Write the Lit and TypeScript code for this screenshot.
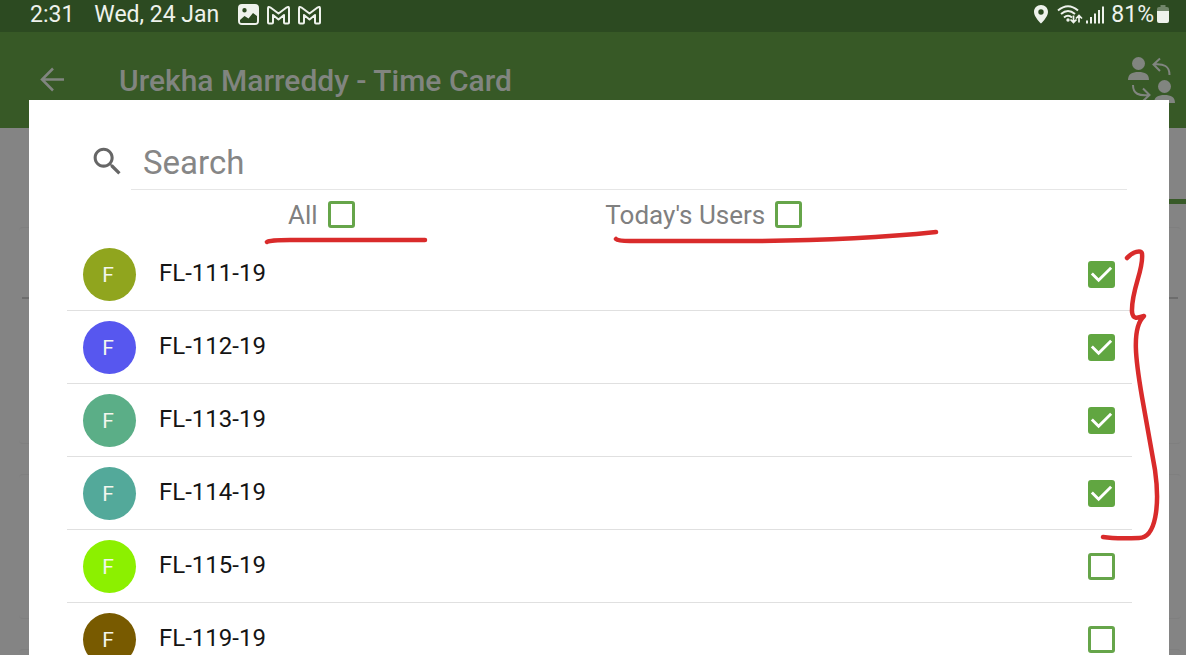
import { LitElement, html, css, svg } from "lit";
import { customElement, property, state } from "lit/decorators.js";

interface User {
  name: string;
  color: string;
  selected: boolean;
}

@customElement("check-box")
class CheckBox extends LitElement {
  static styles = css`
    :host {
      display: block;
    }
    .field {
      display: flex;
      align-items: center;
      gap: 10px;
      color: #808080;
      font-size: 26px;
      line-height: 32px;
    }
    .box {
      display: grid;
    }
    .input {
      grid-area: 1 / 1;
      appearance: none;
      box-sizing: border-box;
      width: 27px;
      height: 27px;
      margin: 0;
      border: 3px solid #66a54a;
      border-radius: 3px;
      background: #fff;
    }
    .input:checked {
      border-color: #61a641;
      background: #61a641;
    }
    .tick {
      grid-area: 1 / 1;
      width: 27px;
      height: 27px;
      fill: none;
      stroke: #fff;
      stroke-width: 3;
      pointer-events: none;
    }
    .input:not(:checked) + .tick {
      display: none;
    }
  `;

  @property() text = "";
  @property() name = "";
  @property({ type: Boolean }) checked = false;

  render() {
    return html`<label class="field">
      ${this.text ? html`<span>${this.text}</span>` : null}
      <span class="box">
        <input class="input" type="checkbox" aria-label=${this.text || this.name} .checked=${this.checked} />
        <svg class="tick" viewBox="0 0 28 28" aria-hidden="true"><path d="M4 13l7 7L24 7" /></svg>
      </span>
    </label>`;
  }
}

@customElement("user-row")
class UserRow extends LitElement {
  static styles = css`
    :host {
      display: block;
    }
    .row {
      display: flex;
      align-items: center;
      height: 72px;
      padding: 0 17px 0 16px;
      border-bottom: 1px solid #e0e0e0;
    }
    .avatar {
      display: grid;
      place-items: center;
      width: 53px;
      height: 53px;
      padding: 2px 3px 0 0;
      box-sizing: border-box;
      border-radius: 50%;
      color: #f4f6ee;
      font-size: 21px;
      line-height: 24px;
    }
    .name {
      flex: 1;
      padding: 0 0 2px 23px;
      color: #141414;
      font-size: 24px;
      line-height: 28px;
    }
  `;

  @property({ attribute: false }) user!: User;

  render() {
    const u = this.user;
    return html`<div class="row">
      <span class="avatar" style="background:${u.color}">F</span>
      <span class="name">${u.name}</span>
      <check-box name=${u.name} ?checked=${u.selected}></check-box>
    </div>`;
  }
}

const mail = svg`<path d="M5 20.500V6.500Q5 4 7.500 5.500L15.500 11.500 23.500 5.500Q26 4 26 6.500V20.500Q26 21.500 25 21.500H22Q21 21.500 21 20.500V13L15.500 17.500 10 13V20.500Q10 21.500 9 21.500H6Q5 21.500 5 20.500Z" />`;

@customElement("app-root")
class AppRoot extends LitElement {
  static styles = css`
    :host {
      display: block;
      position: relative;
      height: 100vh;
      overflow: hidden;
      background: #848484;
      font-family: Roboto, "Liberation Sans", sans-serif;
    }
    .status {
      display: flex;
      align-items: center;
      height: 32px;
      box-sizing: border-box;
      padding: 0 17px 2px 30px;
      background: #2c4a21;
      color: #eef2ec;
      font-size: 23px;
      line-height: 28px;
    }
    .date {
      margin: 0 18px 0 20px;
    }
    .spacer {
      flex: 1;
    }
    .notices,
    .signals {
      display: flex;
      align-items: center;
      gap: 3px;
    }
    .glyph {
      display: block;
      height: 26px;
      fill: #eef2ec;
    }
    .outline {
      fill: none;
      stroke: #eef2ec;
      stroke-width: 2;
      stroke-linejoin: round;
    }
    .bar {
      display: flex;
      align-items: center;
      height: 96px;
      box-sizing: border-box;
      padding: 0 10px 0 36px;
      background: #375926;
      color: #818580;
    }
    .back {
      display: block;
      padding: 0;
      border: 0;
      background: none;
      color: inherit;
    }
    .icon {
      display: block;
      fill: currentColor;
    }
    .line {
      fill: none;
      stroke: currentColor;
      stroke-width: 2.500;
    }
    .thin {
      fill: none;
      stroke: currentColor;
      stroke-width: 2;
    }
    .title {
      flex: 1;
      margin: 0 0 0 51px;
      padding-top: 2px;
      font-size: 30px;
      line-height: 36px;
      font-weight: 500;
    }
    .tabs {
      display: grid;
      grid-template-columns: 1fr 1fr;
      height: 76px;
    }
    .current {
      grid-column: 2;
      border-bottom: 5px solid #385a28;
    }
    .cards {
      display: grid;
      gap: 30px;
      padding: 23px 5px 0 19px;
    }
    .card {
      height: 145px;
      box-sizing: border-box;
      border: 1px solid #7f7f7f;
      border-width: 1px 0;
      border-radius: 4px;
    }
    .tall {
      height: 217px;
      padding: 69px 3px 0;
    }
    .rule {
      height: 2px;
      background: #6d6d6d;
    }
    .dialog {
      position: absolute;
      inset: 100px 17px 0 29px;
      box-sizing: border-box;
      padding: 35px 37px 0 38px;
      overflow: hidden;
      background: #fff;
    }
    .search {
      display: flex;
      align-items: center;
      padding: 0 5px 0 22px;
      color: #666;
    }
    .glass {
      padding-bottom: 2px;
    }
    .query {
      flex: 1;
      min-width: 0;
      height: 55px;
      box-sizing: border-box;
      margin-left: 5px;
      padding: 0 12px;
      border: 0;
      border-bottom: 1px solid #e6e6e6;
      outline: 0;
      background: none;
      color: #333;
      font-family: inherit;
      font-size: 33px;
      line-height: 40px;
    }
    .query::placeholder {
      color: #868686;
      opacity: 1;
    }
    .filters {
      display: grid;
      grid-template-columns: 1fr 1fr;
      justify-items: center;
      align-items: center;
      height: 48px;
      padding: 1px 237px 0 63px;
      box-sizing: border-box;
    }
    .ink {
      position: absolute;
      left: 0;
      top: 0;
      width: 1140px;
      height: 555px;
      fill: none;
      stroke: #d92b2b;
      stroke-width: 4.500;
      stroke-linecap: round;
      stroke-linejoin: round;
      pointer-events: none;
    }
  `;

  @state() private users: User[] = [
    { name: "FL-111-19", color: "#90a51e", selected: true },
    { name: "FL-112-19", color: "#5757ef", selected: true },
    { name: "FL-113-19", color: "#5bae87", selected: true },
    { name: "FL-114-19", color: "#53a99a", selected: true },
    { name: "FL-115-19", color: "#8cf000", selected: false },
    { name: "FL-119-19", color: "#785a00", selected: false },
  ];

  render() {
    return html`
      <div class="status">
        <span>2:31</span>
        <span class="date">Wed, 24 Jan</span>
        <span class="notices">
          <svg class="glyph" width="23" height="26" viewBox="0 0 23 26" aria-hidden="true">
            <path fill-rule="evenodd" d="M5 2H18Q22 2 22 6V19Q22 23 18 23H5Q1 23 1 19V6Q1 2 5 2ZM3 18V19.500Q3 21 4.500 21H18.500Q20 21 20 19.500V14L16 11 11.500 16.500 7.500 14ZM7.500 6A2.200 2.200 0 1 0 7.500 10.400A2.200 2.200 0 1 0 7.500 6Z" />
          </svg>
          <svg class="glyph outline" width="28" height="26" viewBox="0 0 28 26" aria-hidden="true">${mail}</svg>
          <svg class="glyph outline" width="28" height="26" viewBox="0 0 28 26" aria-hidden="true">${mail}</svg>
        </span>
        <span class="spacer"></span>
        <span class="signals">
          <svg class="glyph" width="78" height="26" viewBox="0 0 78 26" aria-hidden="true">
            <g transform="translate(2 0)">
              <path fill-rule="evenodd" d="M9 3C4.900 3 2 6 2 10C2 15 9 21.500 9 21.500S16 15 16 10C16 6 13.100 3 9 3ZM9 7.300A2.700 2.700 0 1 1 9 12.700A2.700 2.700 0 1 1 9 7.300Z" />
              <g fill="none" stroke="#eef2ec" stroke-width="2">
                <path d="M26 8.500Q36 0 46 8.500M29 12Q36 6 43 12M32 15.500Q36 12 40 15.500" />
                <path stroke-width="1.700" d="M41.500 13.500V20.500M38.500 17.500L41.500 20.500 44.500 17.500M47 20.500V13.500M44 16.500L47 13.500 50 16.500" />
              </g>
              <circle cx="36" cy="18" r="1.700" />
            </g>
            <path d="M56 18.500h2v3h-2zM60 15h2v6.500h-2zM64 11.500h2v10h-2zM68 8h2v13.500h-2zM72 4.500h2v17h-2z" />
          </svg>
          <span>81%</span>
          <svg class="glyph" width="12" height="26" viewBox="0 0 12 26" aria-hidden="true">
            <path fill="#71866a" d="M3.500 3h5v2H10Q12 5 12 7V11H0V7Q0 5 2 5H3.500z" />
            <path d="M0 9H12V19Q12 21 10 21H2Q0 21 0 19Z" />
          </svg>
        </span>
      </div>
      <header class="bar">
        <button class="back" aria-label="Back">
          <svg class="icon line" width="32" height="32" viewBox="0 0 32 32"><path d="M28 15.500H6M17 4.500L6 15.500L17 26.500" /></svg>
        </button>
        <h1 class="title">Urekha Marreddy - Time Card</h1>
        <button class="back" aria-label="Switch user">
          <svg class="icon" width="50" height="48" viewBox="0 0 50 48">
            <ellipse cx="12.500" cy="7.500" rx="6.500" ry="6.500" />
            <path d="M2 24C2 18 6 16 12.500 16S23 18 23 24Z" />
            <ellipse cx="38.500" cy="30.500" rx="6.500" ry="6.500" />
            <path d="M28 47C28 41 32 39 38.500 39S49 41 49 47Z" />
            <path class="thin" d="M34 2.500L27.500 8.500L34 15M27.500 8.500C38 7.500 43.500 10 43.500 19M7 29C7 38 13 40 23 39M17 32.500L23.500 39L17 45" />
          </svg>
        </button>
      </header>
      <div class="tabs"><div class="current"></div></div>
      <div class="cards">
        <div class="card tall"><div class="rule"></div></div>
        <div class="card"></div>
        <div class="card"></div>
      </div>
      <section class="dialog" role="dialog" aria-label="Users">
        <label class="search">
          <span class="glass">
            <svg class="icon" width="37" height="37" viewBox="0 0 24 24" aria-hidden="true">
              <path d="M15.500 14h-.790l-.280-.270C15.410 12.590 16 11.110 16 9.500 16 5.910 13.090 3 9.500 3S3 5.910 3 9.500 5.910 16 9.500 16c1.610 0 3.090-.590 4.230-1.570l.270.280v.790l5 4.990L20.490 19l-4.990-5zm-6 0C7.010 14 5 11.990 5 9.500S7.010 5 9.500 5 14 7.010 14 9.500 11.990 14 9.500 14z" />
            </svg>
          </span>
          <input class="query" type="text" placeholder="Search" aria-label="Search" />
        </label>
        <div class="filters">
          <check-box text="All"></check-box>
          <check-box text="Today's Users"></check-box>
        </div>
        ${this.users.map((user) => html`<user-row .user=${user}></user-row>`)}
        <svg class="ink" viewBox="29 100 1140 555" aria-hidden="true">
          <path d="M267 242Q270 240 290 240H425M616 239Q618 241 630 241H740Q850 241 936 232" />
          <path d="M1127 258C1132 252 1142 249 1142 254C1144 270 1131 290 1132 312C1133 320 1138 318 1144 316C1131 328 1136 362 1142 397L1155 470C1160 505 1156 538 1139 538Q1115 539 1103 537" />
        </svg>
      </section>
    `;
  }
}
